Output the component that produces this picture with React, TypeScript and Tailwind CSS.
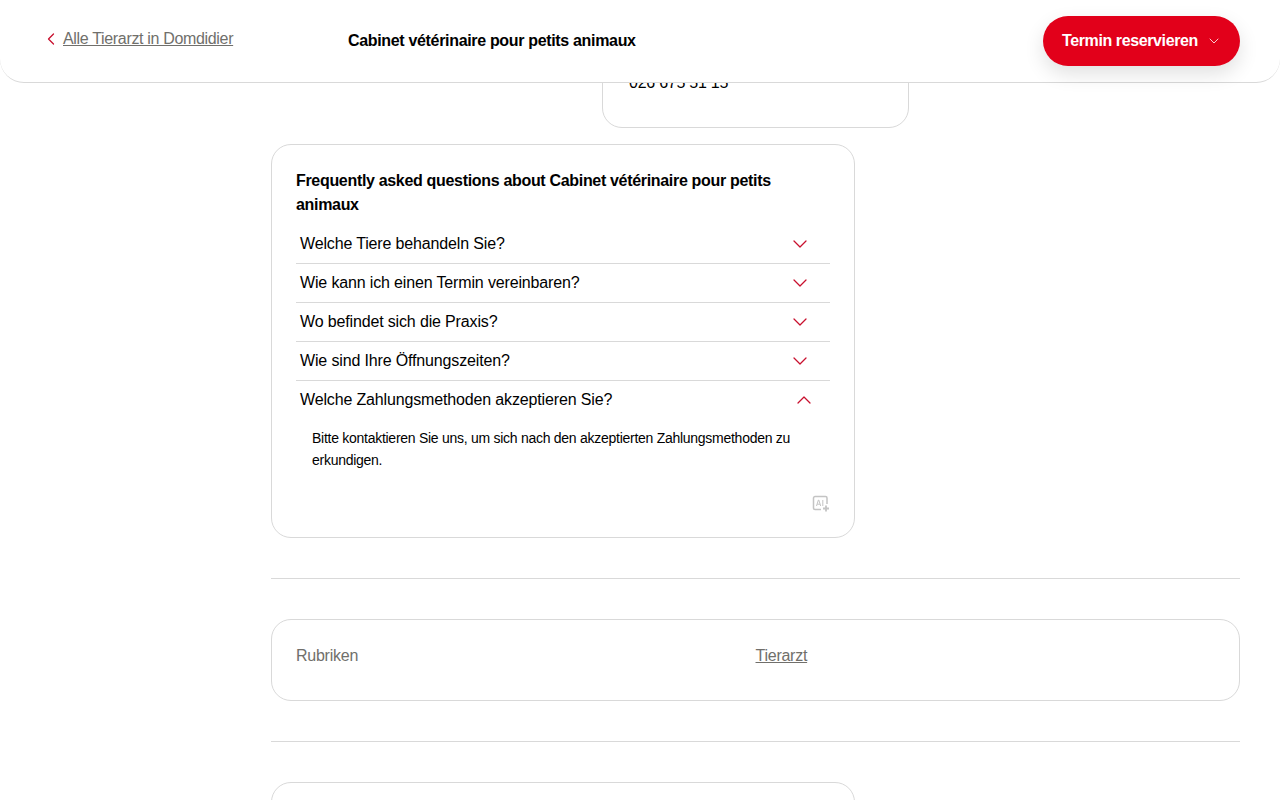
import { ChevronDown, ChevronLeft, ChevronUp } from "lucide-react";

const questions = [
  "Welche Tiere behandeln Sie?",
  "Wie kann ich einen Termin vereinbaren?",
  "Wo befindet sich die Praxis?",
  "Wie sind Ihre Öffnungszeiten?",
];

const AiIcon = () => (
  <svg width="18" height="18" viewBox="0 0 18 18" fill="none" stroke="#c4c4c4" strokeWidth="1.5">
    <path d="M9 14.5H3a1.5 1.5 0 0 1-1.5-1.5V3A1.5 1.5 0 0 1 3 1.5h10.5A1.5 1.5 0 0 1 15 3v6" />
    <path d="M4.5 11 6.4 5h.4l1.9 6M5.2 9.2h2.8M10.8 5v6" strokeWidth="1" />
    <path d="M14 10.5v6M11 13.5h6" strokeWidth="1.8" />
  </svg>
);

const App = () => {
  return (
    <div className="relative h-[800px] overflow-hidden bg-white font-['Liberation_Sans',Arial,sans-serif] text-black">
      {/* Sticky header */}
      <header className="absolute inset-x-0 top-0 z-10 flex h-[83px] items-center justify-between rounded-b-[24px] border-b border-[#d9d9d9] bg-white pl-[41px] pr-[40px]">
        <div className="flex w-[307px] items-center gap-[2px] pb-[4px]">
          <ChevronLeft className="h-[20px] w-[20px] text-[#c8102e]" strokeWidth={1.5} />
          <a className="text-base tracking-[-0.33px] text-[#706f6b] underline">Alle Tierarzt in Domdidier</a>
        </div>
        <div className="flex-1 pb-[1px] text-base font-bold tracking-[-0.33px]">Cabinet vétérinaire pour petits animaux</div>
        <button className="mb-[1px] flex h-[50px] w-[197px] items-center gap-[8px] rounded-full bg-[#e2001a] pl-[19px] text-base font-bold tracking-[-0.39px] text-white shadow-[0_8px_20px_rgba(0,0,0,0.12)]">
          Termin reservieren
          <ChevronDown className="h-[16px] w-[16px] opacity-80" strokeWidth={1.5} />
        </button>
      </header>

      <main className="pl-[271px] pr-[40px]">
        {/* Contact card, mostly behind the header */}
        <div className="ml-[331px] flex h-[128px] w-[307px] items-end rounded-b-[20px] border border-[#d9d9d9] pb-[32px] pl-[26px] text-base tracking-[-0.25px]">
          026 675 51 15
        </div>

        {/* FAQ */}
        <section className="mt-[16px] h-[394px] w-[584px] rounded-[20px] border border-[#d9d9d9] px-[24px] pt-[24px]">
          <h2 className="text-base leading-[24px] font-bold tracking-[-0.32px]">
            Frequently asked questions about Cabinet vétérinaire pour petits animaux
          </h2>
          <div className="mt-[8px]">
            {questions.map((q) => (
              <div key={q} className="flex h-[39px] items-center justify-between border-b border-[#d9d9d9] pl-[4px] pr-[18px] text-base tracking-[-0.15px]">
                {q}
                <ChevronDown className="h-[24px] w-[24px] text-[#c8102e]" strokeWidth={1.25} />
              </div>
            ))}
            <div className="flex h-[38px] items-center justify-between pl-[4px] pr-[14px] text-base tracking-[-0.15px]">
              Welche Zahlungsmethoden akzeptieren Sie?
              <ChevronUp className="h-[24px] w-[24px] text-[#c8102e]" strokeWidth={1.25} />
            </div>
            <p className="mt-[8px] pl-[16px] pr-[24px] text-sm leading-[22px] tracking-[-0.27px]">
              Bitte kontaktieren Sie uns, um sich nach den akzeptierten Zahlungsmethoden zu erkundigen.
            </p>
            <div className="mt-[24px] flex justify-end">
              <AiIcon />
            </div>
          </div>
        </section>

        <hr className="mt-[40px] border-[#d9d9d9]" />

        {/* Categories */}
        <section className="mt-[40px] grid h-[82px] grid-cols-2 rounded-[20px] border border-[#d9d9d9] px-[24px] pt-[24px] text-base tracking-[-0.25px] text-[#706f6b]">
          <span>Rubriken</span>
          <a className="underline">Tierarzt</a>
        </section>

        <hr className="mt-[40px] border-[#d9d9d9]" />

        <section className="mt-[40px] h-[100px] w-[584px] rounded-[20px] border border-[#d9d9d9]" />
      </main>
    </div>
  );
};

export default App;
